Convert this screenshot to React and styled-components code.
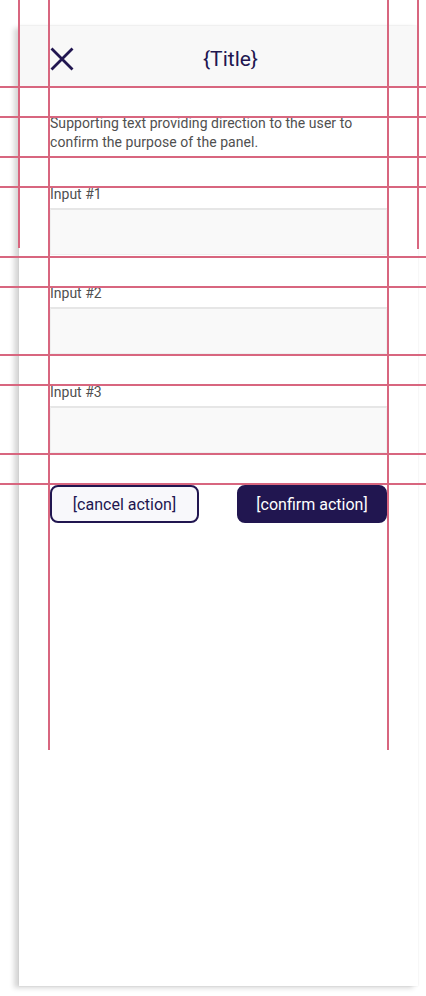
import React from "react";
import styled, { createGlobalStyle } from "styled-components";

const GlobalStyle = createGlobalStyle`
  html, body { margin: 0; padding: 0; background: #ffffff; }
  body { font-family: Roboto, "Liberation Sans", sans-serif; }
  * { box-sizing: border-box; }
`;

const NAVY = "#211650";

const Page = styled.div`
  position: relative;
  width: 426px;
  height: 996px;
  padding: 26px 8px 10px 19px;
  overflow: hidden;
`;

const Panel = styled.section`
  width: 399px;
  height: 960px;
  background: #ffffff;
  box-shadow: -5px 2px 5px rgba(0, 0, 0, 0.16), 0 0 2px rgba(0, 0, 0, 0.1);
  display: flex;
  flex-direction: column;
`;

const Header = styled.header`
  height: 60px;
  background: #f8f8f8;
  display: flex;
  align-items: center;
  padding: 5px 31px 0 31px;
`;

const CloseButton = styled.button`
  width: 24px;
  height: 24px;
  padding: 0;
  border: 0;
  background: transparent;
  display: flex;
  cursor: pointer;
`;

const Title = styled.h1`
  flex: 1;
  margin: 0;
  text-align: center;
  font-family: Roboto, "Liberation Sans", sans-serif;
  font-weight: 400;
  font-size: 21px;
  line-height: 24px;
  color: ${NAVY};
`;

const Body = styled.div`
  padding: 28px 31px 0 31px;
  display: flex;
  flex-direction: column;
`;

const Supporting = styled.p`
  margin: 0 0 30px 0;
  font-size: 14px;
  line-height: 19px;
  height: 42px;
  color: #505050;
  letter-spacing: 0.05px;
`;

const Fields = styled.div`
  display: flex;
  flex-direction: column;
  gap: 30px;
`;

const Field = styled.label`
  display: flex;
  flex-direction: column;
  height: 69px;
`;

const Label = styled.span`
  font-size: 14px;
  line-height: 16px;
  color: #505050;
  margin-bottom: 6px;
`;

const Input = styled.input`
  height: 47px;
  width: 100%;
  border: 1px solid #f0f0f0;
  border-top: 2px solid #e6e6e6;
  background: #f9f9f9;
  font-family: Roboto, "Liberation Sans", sans-serif;
  font-size: 14px;
  outline: none;
`;

const Actions = styled.div`
  margin-top: 32px;
  display: flex;
  justify-content: space-between;
`;

const ActionButton = styled.button`
  width: ${(p) => (p.$primary ? "150px" : "149px")};
  height: 38px;
  border-radius: 8px;
  border: 2px solid ${NAVY};
  background: ${(p) => (p.$primary ? NAVY : "#f8f8fb")};
  color: ${(p) => (p.$primary ? "#ffffff" : NAVY)};
  font-family: Roboto, "Liberation Sans", sans-serif;
  font-size: 16px;
  line-height: 20px;
  padding: 1px 0 0 0;
  cursor: pointer;
`;

const Guides = styled.div`
  position: absolute;
  inset: 0;
  pointer-events: none;
`;

const HLine = styled.div`
  position: absolute;
  left: 0;
  width: 426px;
  height: 2px;
  background: #d8667f;
`;

const VLine = styled.div`
  position: absolute;
  top: 0;
  width: 2px;
  background: #d8667f;
`;

const hLines = [86, 116, 156, 186, 256, 286, 354, 384, 453, 483];
const vLines = [
  { x: 18, h: 248 },
  { x: 48, h: 750 },
  { x: 387, h: 750 },
  { x: 417, h: 249 },
];

const CloseIcon = () => (
  <svg width="24" height="24" viewBox="0 0 24 24" fill="none">
    <path d="M1.5 1.5 L22.5 22.5 M22.5 1.5 L1.5 22.5" stroke={NAVY} strokeWidth="2.8" />
  </svg>
);

export default function App() {
  return (
    <Page>
      <GlobalStyle />
      <Panel>
        <Header>
          <CloseButton aria-label="Close">
            <CloseIcon />
          </CloseButton>
          <Title>{"{Title}"}</Title>
        </Header>
        <Body>
          <Supporting>
            Supporting text providing direction to the user to confirm the purpose of the panel.
          </Supporting>
          <Fields>
            {["Input #1", "Input #2", "Input #3"].map((l) => (
              <Field key={l}>
                <Label>{l}</Label>
                <Input />
              </Field>
            ))}
          </Fields>
          <Actions>
            <ActionButton>[cancel action]</ActionButton>
            <ActionButton $primary>[confirm action]</ActionButton>
          </Actions>
        </Body>
      </Panel>
      <Guides>
        {hLines.map((y) => (
          <HLine key={y} style={{ top: y }} />
        ))}
        {vLines.map((v) => (
          <VLine key={v.x} style={{ left: v.x, height: v.h }} />
        ))}
      </Guides>
    </Page>
  );
}
